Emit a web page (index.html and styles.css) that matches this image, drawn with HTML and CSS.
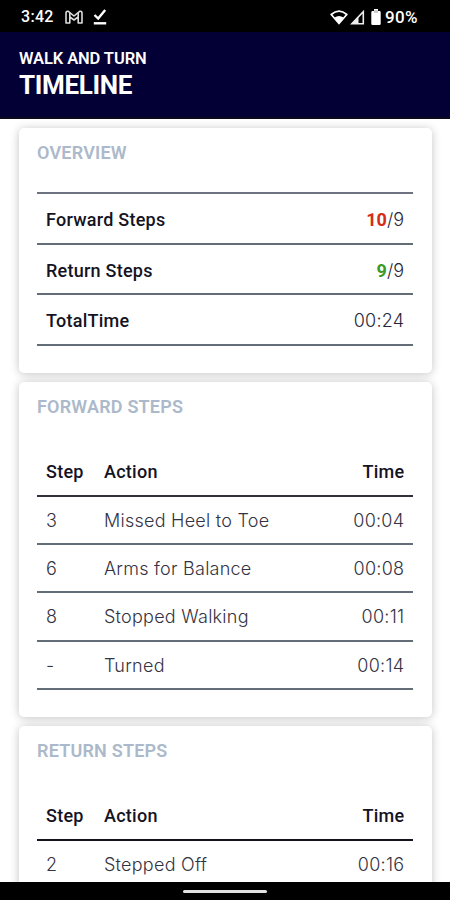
FILE: index.html
```html
<!DOCTYPE html>
<html lang="en">
<head>
<meta charset="utf-8">
<title>Walk and Turn Timeline</title>
<link rel="stylesheet" href="styles.css">
</head>
<body>
<div class="screen">
  <div class="status">
    <span class="clock">3:42</span>
    <svg class="mail" width="18" height="14" viewBox="0 0 18 14" fill="none" stroke="#ddd" stroke-width="1.6" stroke-linejoin="round"><path d="M1 3.2Q1 1 3 1.2L9 6l6-4.8Q17 1 17 3.2V13h-3.8V6.8L9 10 4.8 6.8V13H1z"/><path d="M4.8 2.8v4M13.2 2.8v4"/></svg>
    <svg class="check" width="14" height="16" viewBox="0 0 14 16" fill="none" stroke="#fff" stroke-width="2.4"><path d="M1.5 6l3.7 3.6L12.2 1"/><path d="M.8 14.3h12.4"/></svg>
    <div class="right">
      <svg width="18" height="15" viewBox="0 0 18 15"><path d="M1.2 4.5Q9-2.4 16.8 4.5L9 13.5z" fill="none" stroke="#fff" stroke-width="1.7" stroke-linejoin="round"/><path d="M4.5 7.5Q9 4.3 13.5 7.5L9 13.5z" fill="#fff"/></svg>
      <svg width="15" height="15" viewBox="0 0 15 15"><path d="M1.8 13.7L13.3 1.7v12z" fill="none" stroke="#eee" stroke-width="1.6"/><path d="M1.8 13.7L8.5 6.6v7.1z" fill="#eee"/></svg>
      <svg class="battery" width="10" height="16" viewBox="0 0 10 16"><path d="M3 0h4v2h1.5Q9.7 2 9.7 3.2v11.5Q9.7 16 8.5 16h-7Q.3 16 .3 14.7V3.2Q.3 2 1.5 2H3z" fill="#fff"/><path d="M3 1h4v3H3z" fill="#ccc"/></svg>
      <span class="percent">90%</span>
    </div>
  </div>
  <header class="header">
    <div class="subtitle">WALK AND TURN</div>
    <h1>TIMELINE</h1>
  </header>
  <main class="content">
    <section class="card overview">
      <h2>OVERVIEW</h2>
      <div class="summary">
        <div class="pair"><b>Forward Steps</b><span><b class="bad">10</b>/9</span></div>
        <div class="pair"><b>Return Steps</b><span><b class="good">9</b>/9</span></div>
        <div class="pair"><b>TotalTime</b><span class="time">00:24</span></div>
      </div>
    </section>
    <section class="card forward">
      <h2>FORWARD STEPS</h2>
      <div class="row head"><span>Step</span><span>Action</span><span>Time</span></div>
      <div class="row"><span>3</span><span>Missed Heel to Toe</span><span>00:04</span></div>
      <div class="row"><span>6</span><span>Arms for Balance</span><span>00:08</span></div>
      <div class="row"><span>8</span><span>Stopped Walking</span><span>00:11</span></div>
      <div class="row"><span>-</span><span>Turned</span><span>00:14</span></div>
    </section>
    <section class="card return">
      <h2>RETURN STEPS</h2>
      <div class="row head"><span>Step</span><span>Action</span><span>Time</span></div>
      <div class="row"><span>2</span><span>Stepped Off</span><span>00:16</span></div>
    </section>
  </main>
  <div class="navbar"><div class="handle"></div></div>
</div>
</body>
</html>
```
FILE: styles.css
```css
* { box-sizing: border-box; }
body { margin: 0; background: #fff; font-family: Inter, "Liberation Sans", sans-serif; }
.screen { width: 450px; height: 900px; display: flex; flex-direction: column; overflow: hidden; }
.status { height: 32px; flex: none; background: #000; color: #fff; display: flex; align-items: center; padding: 2px 31px 0 21px; font: 500 16px/20px Roboto, sans-serif; }
.clock { width: 44px; letter-spacing: .3px; }
.check { margin-left: 10px; }
.right { margin-left: auto; display: flex; align-items: center; }
.right svg + svg { margin-left: 2px; }
.right .battery { margin: 0 4px 0 6px; }
.percent { width: 34px; white-space: nowrap; font-size: 17px; letter-spacing: .4px; }
.header { height: 87px; flex: none; background: #030036; border-bottom: 2px solid #0b0a1b; color: #fff; padding: 16px 19px; font-family: Roboto, sans-serif; }
.subtitle { font-size: 16.5px; font-weight: 600; line-height: 21px; letter-spacing: -.1px; }
h1 { margin: 1px 0 0; font-size: 26px; line-height: 30px; font-weight: 700; letter-spacing: -.35px; }
.content { flex: 1; min-height: 0; overflow: hidden; padding: 9px 18px 0 19px; display: flex; flex-direction: column; gap: 9px; }
.card { flex: none; background: #fff; border-radius: 5px; padding: 13px 19px 0 18px; box-shadow: 0 1px 10px rgba(0,0,0,.24); }
.overview { height: 245px; }
.forward { height: 335px; }
.return { height: 220px; }
h2 { margin: 0; height: 23px; font: 600 18px/24px Roboto, sans-serif; letter-spacing: .2px; color: #acb9ca; }
.summary { margin-top: 28px; border-top: 2px solid #6e7180; }
.pair { height: 50.5px; border-bottom: 2px solid #626d78; display: flex; justify-content: space-between; align-items: center; padding: 3px 9px 0; color: #29283a; font-size: 18px; font-weight: 300; }
.pair > b, .head { font-family: Roboto, sans-serif; font-weight: 500; color: #14131f; letter-spacing: .25px; }
.pair span b { font-family: Roboto, sans-serif; font-weight: 700; }
.pair .time { letter-spacing: .2px; margin-right: -.2px; }
.pair .bad { color: #d62b16; }
.pair .good { color: #399b25; }
.row { height: 48.2px; border-bottom: 2px solid #626d78; display: grid; grid-template-columns: 58px 1fr auto; align-items: center; padding: 1px 8.7px 0 9px; font-size: 18px; font-weight: 300; letter-spacing: .25px; color: #343342; }
.row.head { height: 50px; margin-top: 29px; border-color: #30313b; font-weight: 500; color: #14131f; }
.return .row.head { border-color: #14131c; }
.navbar { height: 18px; flex: none; background: #000; display: flex; justify-content: center; align-items: center; }
.handle { width: 84px; height: 3px; border-radius: 2px; background: #e2e2e2; }
```
